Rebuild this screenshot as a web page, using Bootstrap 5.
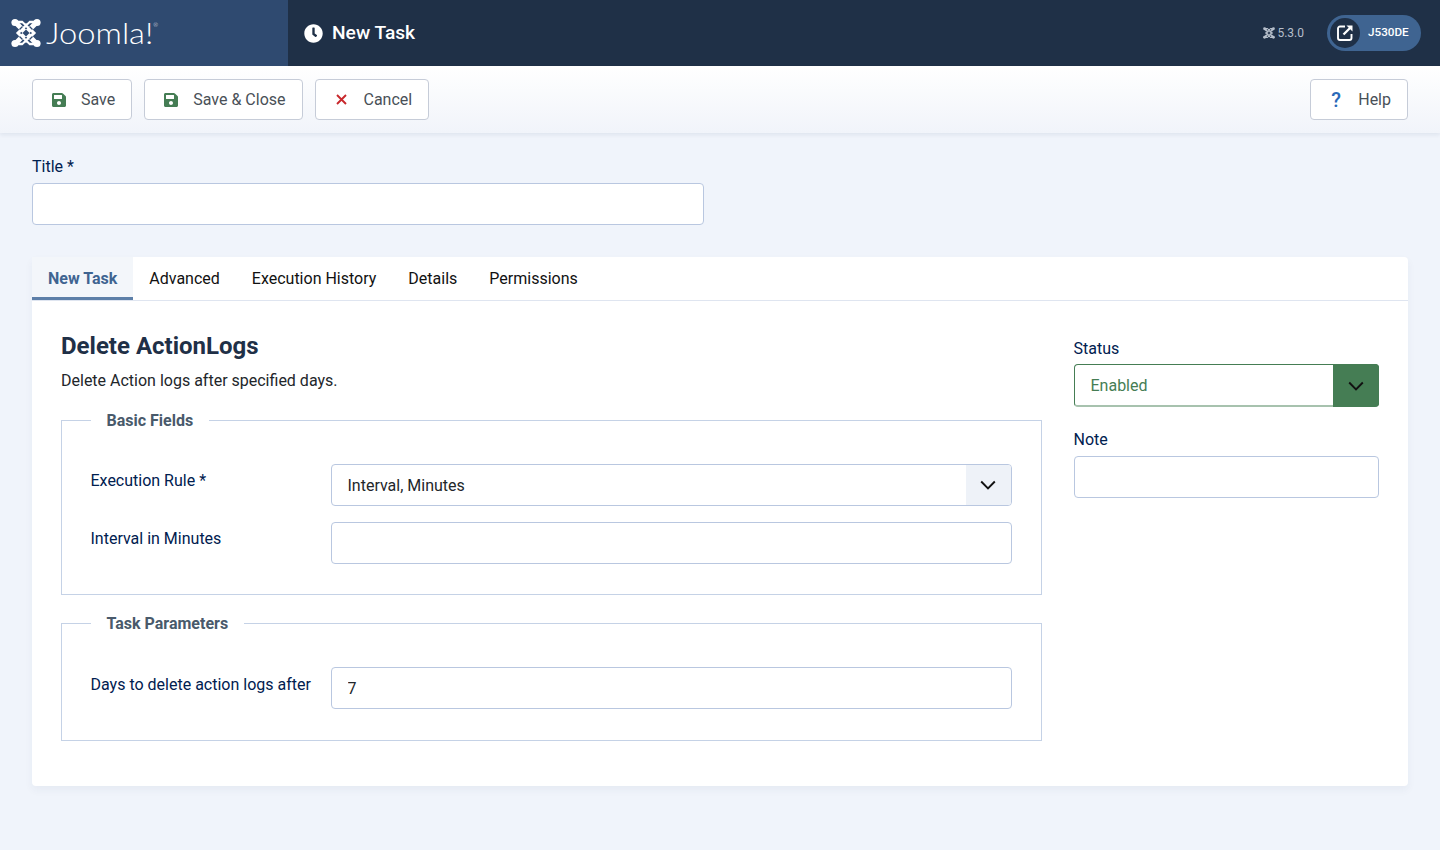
<!DOCTYPE html>
<html lang="en">
<head>
<meta charset="utf-8">
<title>New Task</title>
<link href="https://cdn.jsdelivr.net/npm/bootstrap@5.3.0/dist/css/bootstrap.min.css" rel="stylesheet">
<style>
body{font-family:Roboto,"Liberation Sans",sans-serif;background:#f0f4fb;color:#22262a;font-size:16px;min-height:850px}
.svgdefs{position:absolute;width:0;height:0}
.hdr{height:66px;background:#1f3047}
.brandbox{width:288px;background:#2f4a70;padding-left:11px}
.wordmark{font-family:Lato,Roboto,sans-serif;font-weight:300;font-size:29px;line-height:1;color:#fff;margin-left:5px;transform:scaleX(1.13) translateY(-1px);transform-origin:left center}
.wordmark sup{font-size:5px;top:-17px;position:relative;vertical-align:baseline}
.pagetitle{padding-left:16px;font-size:19.2px;font-weight:500;color:#fff;gap:9px;line-height:1}
.ver{font-size:12px;color:#b6bfcb;gap:2px;margin-right:23px}
.userpill{height:36px;width:94px;border-radius:18px;background:#3f6491;margin-right:19px;padding-left:3px;color:#fff;font-size:11.7px;font-weight:500;gap:8px}
.usercirc{width:30px;height:30px;border-radius:50%;background:#1f3047}
.tbar{height:67px;padding:13px 32px;background:linear-gradient(#fff,#f1f4fa);box-shadow:0 2px 4px rgba(30,50,90,.08)}
.tbtngroup{gap:12px}
.tbtn{height:41px;background:#fff;border:1px solid #c6ccd8;border-radius:4px;color:#495057;font-size:16px;padding:0 16px 0 19px;gap:15px;line-height:1}
.helpbtn{padding-left:18px}
.tico{width:14px;display:flex;justify-content:center}
.qmark{color:#2a69b8;font-weight:500;font-size:20px;line-height:1}
.mainarea{padding:24px 32px 0}
.flabel{color:#00204f;font-size:16px;line-height:19px;margin-bottom:7px;display:block}
.statuslabel{margin-bottom:6px}
.finput{display:block;width:100%;height:42px;background:#fff;border:1px solid #b9c7e0;border-radius:4px;padding:1px 16px 0;color:#22262a;font-size:16px;font-family:inherit}
.titlewrap{width:672px;margin-bottom:32px}
.panel{background:#fff;border-radius:4px;box-shadow:0 4px 8px rgba(30,50,90,.05);min-height:529px}
.tabbar{height:44px;border-bottom:1px solid #dfe5f0}
.tabitem{padding:0 16px;color:#111;line-height:44px;height:43px}
.tabitem.on{background:#f3f6fa;color:#3f6491;font-weight:700;border-bottom:3px solid #5d7fa8}
.panelbody{padding:29px 29px 0;gap:32px}
.leftside{width:980.5px}
.rightside{width:305.5px;padding-top:9px}
.ptitle{font-size:24px;font-weight:700;color:#1f3047;line-height:29px;margin:2px 0 10px}
.pdesc{line-height:19px;margin-bottom:21px;color:#22262a}
.fset{border:1px solid #c5d2e6;padding:34px 29px 30px 28.5px;margin:0}
.fset + .fset{margin-top:18.5px;padding-bottom:31px}
.fset + .fset .rowlabel{padding-top:8px}
.fset legend{float:none;width:auto;margin:0;padding:0 16px;font-size:16px;font-weight:700;color:#495a6b;line-height:19px}
.frow{display:flex;margin-bottom:16px}
.frow:last-child{margin-bottom:0}
.rowlabel{width:240px;color:#00204f;line-height:19px;padding-top:7px;margin:0}
.fctl{width:681px}
.selwrap{position:relative}
.statuswrap{margin-bottom:23px}
.selcaret{position:absolute;right:1px;top:1px;bottom:1px;width:45px;background:#eef2f8;border-radius:0 3px 3px 0;display:flex;align-items:center;justify-content:center}
.selcaret.green{background:#457d54;border:0;width:46px;right:0;top:0;bottom:0;border-radius:0 4px 4px 0}
.seltext{line-height:41px;padding-top:0}
.statusbox{border:1px solid #457d54;border-bottom:2px solid #a7c2ae;color:#457d54;height:43px}
</style>
</head>
<body>
<svg class="svgdefs" aria-hidden="true">
  <defs>
    <mask id="jmask" maskUnits="userSpaceOnUse" x="0" y="0" width="30" height="30">
      <rect width="30" height="30" fill="#fff"/>
      <path d="M15 11.5 L18.5 15 L15 18.5 L11.5 15 Z" fill="#000"/>
      <path d="M8.5 11.5 L11.5 8.5 M18.5 8.5 L21.5 11.5 M8.5 18.5 L11.5 21.5 M18.5 21.5 L21.5 18.5" stroke="#000" stroke-width="1.3"/>
      <path d="M10.5 5.5 L13 8 M19.5 5.5 L17 8 M10.5 24.5 L13 22 M19.5 24.5 L17 22" stroke="#000" stroke-width="1.3"/>
    </mask>
    <symbol id="jlogo" viewBox="0 0 30 30">
      <g mask="url(#jmask)" fill="none" stroke="currentColor" stroke-linecap="round">
        <path d="M5 5 L25 25 M25 5 L5 25" stroke-width="5"/>
        <path d="M15 7 L23 15 L15 23 L7 15 Z" stroke-width="3"/>
        <path d="M5 4 L11 4 L15 8 L19 4 L25 4 M5 26 L11 26 L15 22 L19 26 L25 26" stroke-width="2.6"/>
      </g>
      <g fill="currentColor">
        <circle cx="4" cy="4.5" r="3.6"/><circle cx="26" cy="4.5" r="3.6"/><circle cx="4" cy="25.5" r="3.6"/><circle cx="26" cy="25.5" r="3.6"/>
      </g>
    </symbol>
  </defs>
</svg>
<header class="hdr d-flex">
  <div class="brandbox d-flex align-items-center text-white">
    <svg width="30" height="30" aria-hidden="true"><use href="#jlogo"/></svg>
    <span class="wordmark">Joomla!<sup>®</sup></span>
  </div>
  <div class="pagetitle d-flex align-items-center flex-grow-1">
    <svg width="19" height="19" viewBox="0 0 512 512" aria-hidden="true"><path fill="#fff" d="M256,8C119,8,8,119,8,256S119,504,256,504,504,393,504,256,393,8,256,8Zm92.49,313h0l-20,25a16,16,0,0,1-22.49,2.5h0l-67-49.72a40,40,0,0,1-15-31.23V112a16,16,0,0,1,16-16h32a16,16,0,0,1,16,16V256l58,42.5A16,16,0,0,1,348.49,321Z"/></svg>
    <span>New Task</span>
  </div>
  <div class="d-flex align-items-center">
    <div class="ver d-flex align-items-center">
      <svg width="12" height="12" aria-hidden="true"><use href="#jlogo"/></svg>
      <span>5.3.0</span>
    </div>
    <div class="userpill d-flex align-items-center">
      <span class="usercirc d-flex align-items-center justify-content-center">
        <svg width="18" height="18" viewBox="0 0 18 18" fill="none" aria-hidden="true"><path d="M9 2.5 H4 A2 2 0 0 0 2 4.5 V14 A2 2 0 0 0 4 16 H13.5 A2 2 0 0 0 15.5 14 V10" stroke="#fff" stroke-width="1.9"/><path d="M7.5 10.5 L15 3" stroke="#fff" stroke-width="2.3"/><path d="M10.5 1.5 H16.5 V7.5 Z" fill="#fff"/></svg>
      </span>
      <span>J530DE</span>
    </div>
  </div>
</header>

<div class="tbar d-flex justify-content-between">
  <div class="d-flex tbtngroup">
    <button class="tbtn d-flex align-items-center" type="button"><span class="tico"><svg width="14" height="16" viewBox="0 0 448 512" aria-hidden="true"><path fill="#457d54" d="M433.941 129.941l-83.882-83.882A48 48 0 0 0 316.118 32H48C21.49 32 0 53.49 0 80v352c0 26.51 21.49 48 48 48h352c26.51 0 48-21.49 48-48V163.882a48 48 0 0 0-14.059-33.941zM224 416c-35.346 0-64-28.654-64-64 0-35.346 28.654-64 64-64s64 28.654 64 64c0 35.346-28.654 64-64 64zm96-304.52V212c0 6.627-5.373 12-12 12H76c-6.627 0-12-5.373-12-12V108c0-6.627 5.373-12 12-12h228.52c3.183 0 6.235 1.264 8.485 3.515l3.48 3.48A11.996 11.996 0 0 1 320 111.48z"/></svg></span>Save</button>
    <button class="tbtn d-flex align-items-center" type="button"><span class="tico"><svg width="14" height="16" viewBox="0 0 448 512" aria-hidden="true"><path fill="#457d54" d="M433.941 129.941l-83.882-83.882A48 48 0 0 0 316.118 32H48C21.49 32 0 53.49 0 80v352c0 26.51 21.49 48 48 48h352c26.51 0 48-21.49 48-48V163.882a48 48 0 0 0-14.059-33.941zM224 416c-35.346 0-64-28.654-64-64 0-35.346 28.654-64 64-64s64 28.654 64 64c0 35.346-28.654 64-64 64zm96-304.52V212c0 6.627-5.373 12-12 12H76c-6.627 0-12-5.373-12-12V108c0-6.627 5.373-12 12-12h228.52c3.183 0 6.235 1.264 8.485 3.515l3.48 3.48A11.996 11.996 0 0 1 320 111.48z"/></svg></span>Save &amp; Close</button>
    <button class="tbtn d-flex align-items-center" type="button"><span class="tico"><svg width="11" height="11" viewBox="0 0 11 11" aria-hidden="true"><path d="M1 1 L10 10 M10 1 L1 10" stroke="#c8282c" stroke-width="1.9" fill="none"/></svg></span>Cancel</button>
  </div>
  <button class="tbtn helpbtn d-flex align-items-center" type="button"><span class="tico qmark">?</span>Help</button>
</div>

<main class="mainarea">
  <div class="titlewrap">
    <label class="flabel" for="ttl">Title *</label>
    <input class="finput" id="ttl" type="text">
  </div>
  <section class="panel">
    <div class="tabbar d-flex">
      <div class="tabitem on">New Task</div>
      <div class="tabitem">Advanced</div>
      <div class="tabitem">Execution History</div>
      <div class="tabitem">Details</div>
      <div class="tabitem">Permissions</div>
    </div>
    <div class="panelbody d-flex">
      <div class="leftside">
        <h2 class="ptitle">Delete ActionLogs</h2>
        <p class="pdesc">Delete Action logs after specified days.</p>
        <fieldset class="fset">
          <legend>Basic Fields</legend>
          <div class="frow">
            <label class="rowlabel">Execution Rule *</label>
            <div class="fctl selwrap">
              <div class="finput seltext">Interval, Minutes</div>
              <span class="selcaret"><svg width="16" height="10" viewBox="0 0 16 10" aria-hidden="true"><path d="M1.2 1.5 L8 8.3 L14.8 1.5" stroke="#111" stroke-width="1.9" fill="none"/></svg></span>
            </div>
          </div>
          <div class="frow">
            <label class="rowlabel">Interval in Minutes</label>
            <div class="fctl"><input class="finput" type="text"></div>
          </div>
        </fieldset>
        <fieldset class="fset">
          <legend>Task Parameters</legend>
          <div class="frow">
            <label class="rowlabel">Days to delete action logs after</label>
            <div class="fctl"><input class="finput" type="text" value="7"></div>
          </div>
        </fieldset>
      </div>
      <aside class="rightside">
        <label class="flabel statuslabel">Status</label>
        <div class="selwrap statuswrap">
          <div class="finput seltext statusbox">Enabled</div>
          <span class="selcaret green"><svg width="16" height="10" viewBox="0 0 16 10" aria-hidden="true"><path d="M1.2 1.5 L8 8.3 L14.8 1.5" stroke="#111" stroke-width="1.9" fill="none"/></svg></span>
        </div>
        <label class="flabel">Note</label>
        <input class="finput" type="text">
      </aside>
    </div>
  </section>
</main>
<script src="https://cdn.jsdelivr.net/npm/bootstrap@5.3.0/dist/js/bootstrap.bundle.min.js"></script>
</body>
</html>
